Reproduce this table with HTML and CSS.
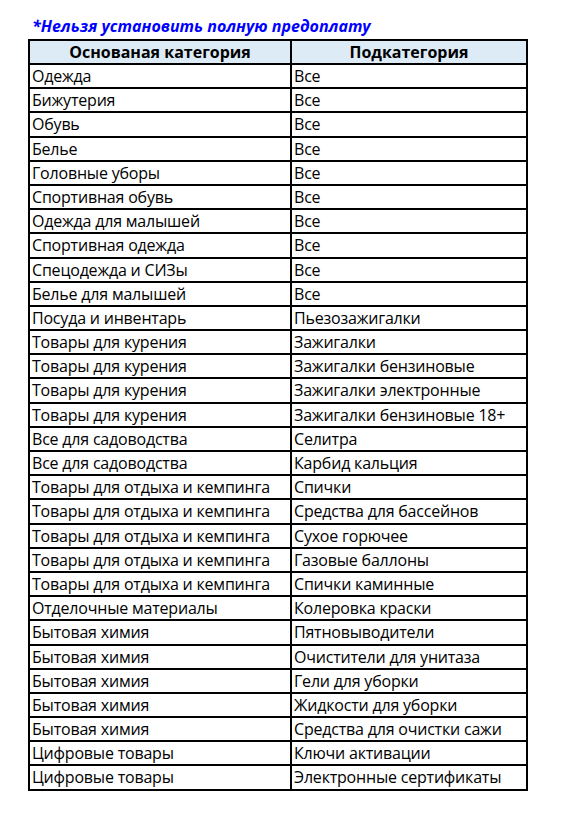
FILE: index.html
```html
<!DOCTYPE html>
<html lang="ru">
<head>
<meta charset="utf-8">
<title>Категории</title>
<link rel="stylesheet" href="styles.css">
</head>
<body>
<div class="page">
  <p class="note">*Нельзя установить полную предоплату</p>
  <div class="sheet">
    <div class="cell head">Основаная категория</div>
    <div class="cell head">Подкатегория</div>
    <div class="cell">Одежда</div><div class="cell">Все</div>
    <div class="cell">Бижутерия</div><div class="cell">Все</div>
    <div class="cell">Обувь</div><div class="cell">Все</div>
    <div class="cell">Белье</div><div class="cell">Все</div>
    <div class="cell">Головные уборы</div><div class="cell">Все</div>
    <div class="cell">Спортивная обувь</div><div class="cell">Все</div>
    <div class="cell">Одежда для малышей</div><div class="cell">Все</div>
    <div class="cell">Спортивная одежда</div><div class="cell">Все</div>
    <div class="cell">Спецодежда и СИЗы</div><div class="cell">Все</div>
    <div class="cell">Белье для малышей</div><div class="cell">Все</div>
    <div class="cell">Посуда и инвентарь</div><div class="cell">Пьезозажигалки</div>
    <div class="cell">Товары для курения</div><div class="cell">Зажигалки</div>
    <div class="cell">Товары для курения</div><div class="cell">Зажигалки бензиновые</div>
    <div class="cell">Товары для курения</div><div class="cell">Зажигалки электронные</div>
    <div class="cell">Товары для курения</div><div class="cell">Зажигалки бензиновые 18+</div>
    <div class="cell">Все для садоводства</div><div class="cell">Селитра</div>
    <div class="cell">Все для садоводства</div><div class="cell">Карбид кальция</div>
    <div class="cell">Товары для отдыха и кемпинга</div><div class="cell">Спички</div>
    <div class="cell">Товары для отдыха и кемпинга</div><div class="cell">Средства для бассейнов</div>
    <div class="cell">Товары для отдыха и кемпинга</div><div class="cell">Сухое горючее</div>
    <div class="cell">Товары для отдыха и кемпинга</div><div class="cell">Газовые баллоны</div>
    <div class="cell">Товары для отдыха и кемпинга</div><div class="cell">Спички каминные</div>
    <div class="cell">Отделочные материалы</div><div class="cell">Колеровка краски</div>
    <div class="cell">Бытовая химия</div><div class="cell">Пятновыводители</div>
    <div class="cell">Бытовая химия</div><div class="cell">Очистители для унитаза</div>
    <div class="cell">Бытовая химия</div><div class="cell">Гели для уборки</div>
    <div class="cell">Бытовая химия</div><div class="cell">Жидкости для уборки</div>
    <div class="cell">Бытовая химия</div><div class="cell">Средства для очистки сажи</div>
    <div class="cell">Цифровые товары</div><div class="cell">Ключи активации</div>
    <div class="cell">Цифровые товары</div><div class="cell">Электронные сертификаты</div>
  </div>
</div>
</body>
</html>
```
FILE: styles.css
```css
html, body {
  margin: 0;
  padding: 0;
  background: #ffffff;
}
body {
  font-family: "Open Sans", "Noto Sans", "DejaVu Sans", sans-serif;
  color: #000000;
}
.page {
  padding: 14px 0 0 28px;
}
.note {
  margin: 0 0 0 4px;
  height: 25px;
  font-size: 16px;
  line-height: 25px;
  font-weight: 700;
  font-style: italic;
  color: #0000ff;
}
.sheet {
  display: grid;
  grid-template-columns: 262px 236px;
  grid-template-rows: 24px;
  grid-auto-rows: 24.2px;
  width: 500px;
  box-sizing: border-box;
  border-left: 2px solid #000;
  border-top: 2px solid #000;
}
.cell {
  box-sizing: border-box;
  border-right: 2px solid #000;
  border-bottom: 2px solid #000;
  padding: 0 0 0 2px;
  font-size: 16px;
  line-height: 22px;
  letter-spacing: -0.2px;
  white-space: nowrap;
  overflow: hidden;
}
.head {
  background: #ddebf7;
  font-weight: 700;
  text-align: center;
  padding: 0;
  letter-spacing: 0;
}
```
